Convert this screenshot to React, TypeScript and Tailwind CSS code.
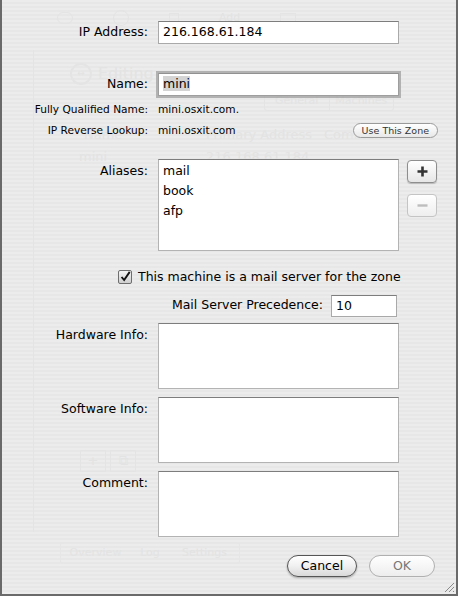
import React from "react";

const FONT = { fontFamily: '"DejaVu Sans", "Liberation Sans", sans-serif' };

function Field({ value, className = "", focused = false }: { value?: string; className?: string; focused?: boolean }) {
  return (
    <div
      className={`bg-white border border-[#a9a9a9] border-t-[#7d7d7d] px-[4px] text-[12.5px] leading-[20px] text-black ${
        focused ? "outline outline-[3px] outline-[#9a9a9a]/70 -outline-offset-[1px]" : ""
      } ${className}`}
    >
      {focused && value ? <span className="bg-[#d4d4d4]">{value}</span> : value}
    </div>
  );
}

function Row({ label, small, top, children, className = "" }: { label: string; small?: boolean; top?: boolean; children: React.ReactNode; className?: string }) {
  return (
    <div className={`flex ${top ? "items-start" : "items-center"} ${className}`}>
      <div
        className={`w-[147px] shrink-0 text-right pr-[1px] whitespace-nowrap ${small ? "text-[10.6px]" : "text-[12.5px]"} ${top ? "pt-[3px]" : ""} text-black`}
      >
        {label}
      </div>
      <div className="ml-[9px] flex-1 flex items-center">{children}</div>
    </div>
  );
}

function TextArea({ h, children }: { h: string; children?: React.ReactNode }) {
  return (
    <div className={`w-[241px] ${h} bg-white border border-[#b3b3b3] border-t-[#7d7d7d] px-[4px] py-[1px] text-[12.5px] leading-[20px]`}>
      {children}
    </div>
  );
}

// faded window behind the sheet
function Ghost() {
  const line = "border-[#e4e4e4]";
  return (
    <div className="flex flex-col h-full text-[#e3e3e3] text-[13px] whitespace-nowrap">
      <div className="flex items-center gap-[40px] pl-[55px] pt-[6px] h-[30px]">
        <div className={`w-[16px] h-[12px] rounded-full border ${line}`} />
        <div className={`w-[16px] h-[16px] rounded-full border ${line}`} />
        <div className={`w-[10px] h-[10px] border ${line}`} />
        <div className="text-[11px]">Add</div>
        <div className={`w-[16px] h-[10px] border ${line}`} />
      </div>
      <div className="flex flex-1 mt-[20px]">
        <div className={`w-[32px] border-r ${line}`} />
        <div className="flex-1 flex flex-col">
          <div className="flex items-center gap-[6px] pl-[36px] pt-[12px]">
            <div className={`w-[22px] h-[22px] rounded-full border-2 ${line} text-[9px] flex items-center justify-center`}>↔</div>
            <span className="text-[16px]">Editing</span>
          </div>
          <div className={`flex ml-[230px] mt-[5px] border ${line} rounded-[3px] w-[130px] h-[20px] text-[11px]`}>
            <div className={`flex-1 text-center leading-[18px] border-r ${line}`}>General</div>
            <div className="flex-1 text-center leading-[18px]">Machines</div>
          </div>
          <div className="flex mt-[14px] text-[13px]">
            <span className="ml-[50px] w-[122px]">Name</span>
            <span className="w-[118px]">Primary Address</span>
            <span>Comment</span>
          </div>
          <div className="flex mt-[2px] text-[13px]">
            <span className="ml-[45px] w-[127px]">mini</span>
            <span>216.168.61.184</span>
          </div>
          <div className="flex-1" />
          <div className="flex gap-[4px] ml-[46px] mb-[60px]">
            <div className={`w-[26px] h-[22px] border ${line} text-center leading-[20px]`}>+</div>
            <div className={`w-[26px] h-[22px] border ${line} text-center leading-[20px]`}>⧉</div>
          </div>
        </div>
      </div>
      <div className="flex ml-[58px] mb-[30px] mt-[10px] border border-[#e6e6e6] rounded-[3px] w-[180px] h-[22px] text-[11px]">
        <div className="flex-1 text-center leading-[20px]">Overview</div>
        <div className="w-[40px] text-center leading-[20px]">Log</div>
        <div className="flex-1 text-center leading-[20px]">Settings</div>
      </div>
    </div>
  );
}

export default function App() {
  return (
    <div style={FONT} className="relative w-[458px] h-[596px] overflow-hidden bg-[repeating-linear-gradient(0deg,#ececec_0px,#ececec_2px,#e7e7e7_2px,#e7e7e7_4px)] border-l-2 border-r-2 border-b-2 border-[#6a6a6a] text-black">
      <Ghost />

      {/* sheet */}
      <div className="absolute inset-0 flex flex-col pt-[21px] pr-[20px]">
        <Row label="IP Address:">
          <Field value="216.168.61.184" className="w-[241px] h-[23px]" />
        </Row>
        <Row label="Name:" className="mt-[29px]">
          <Field value="mini" focused className="w-[241px] h-[23px]" />
        </Row>
        <Row label="Fully Qualified Name:" small className="mt-[5px] h-[17px]">
          <span className="text-[10.6px]">mini.osxit.com.</span>
        </Row>
        <Row label="IP Reverse Lookup:" small className="mt-[4px] h-[17px]">
          <span className="text-[10.6px]">mini.osxit.com</span>
          <div className="ml-auto mr-[-2px] h-[15px] px-[8px] rounded-full border border-[#9a9a9a] bg-gradient-to-b from-white to-[#e8e8e8] text-[9.5px] leading-[13px] text-[#333]">
            Use This Zone
          </div>
        </Row>
        <Row label="Aliases:" top className="mt-[20px]">
          <TextArea h="h-[92px]">
            <div>mail</div>
            <div>book</div>
            <div>afp</div>
          </TextArea>
          <div className="self-start ml-[8px] flex flex-col gap-[11px] pt-[1px]">
            <div className="w-[30px] h-[23px] rounded-[4px] border border-[#8e8e8e] bg-gradient-to-b from-white to-[#e6e6e6] shadow-[0_1px_1px_rgba(0,0,0,0.2)] flex items-center justify-center">
              <svg width="13" height="13" viewBox="0 0 13 13"><path d="M6.5 1.5v10M1.5 6.5h10" stroke="#333" strokeWidth="2.6" /></svg>
            </div>
            <div className="w-[30px] h-[23px] rounded-[4px] border border-[#c4c4c4] bg-gradient-to-b from-white to-[#eeeeee] flex items-center justify-center">
              <svg width="13" height="13" viewBox="0 0 13 13"><path d="M1.5 6.5h10" stroke="#bdbdbd" strokeWidth="2.4" /></svg>
            </div>
          </div>
        </Row>
        <div className="flex items-center mt-[17px] ml-[116px]">
          <div className="w-[14px] h-[14px] rounded-[2px] border border-[#6e6e6e] bg-gradient-to-b from-[#f4f4f4] to-[#cfcfcf] flex items-center justify-center">
            <svg width="14" height="14" viewBox="0 0 14 14"><path d="M3 7l3 3.5L12.5 1" fill="none" stroke="#111" strokeWidth="2.2" /></svg>
          </div>
          <span className="ml-[6px] text-[12.5px]">This machine is a mail server for the zone</span>
        </div>
        <div className="flex items-center justify-end mt-[8px] mr-[39px]">
          <span className="text-[12.5px]">Mail Server Precedence:</span>
          <Field value="10" className="ml-[8px] w-[66px] h-[22px]" />
        </div>
        <Row label="Hardware Info:" top className="mt-[6px]">
          <TextArea h="h-[66px]" />
        </Row>
        <Row label="Software Info:" top className="mt-[8px]">
          <TextArea h="h-[66px]" />
        </Row>
        <Row label="Comment:" top className="mt-[8px]">
          <TextArea h="h-[66px]" />
        </Row>
        <div className="flex justify-end gap-[12px] mt-[18px] mr-[1px]">
          <div className="w-[70px] h-[22px] rounded-full border border-[#555] bg-gradient-to-b from-white via-[#f0f0f0] to-[#d9d9d9] shadow-[0_1px_2px_rgba(0,0,0,0.3)] text-center text-[12.5px] leading-[20px]">
            Cancel
          </div>
          <div className="w-[66px] h-[22px] rounded-full border border-[#b0b0b0] bg-gradient-to-b from-white to-[#ededed] text-center text-[12.5px] leading-[20px] text-[#777]">
            OK
          </div>
        </div>
      </div>

      <svg className="absolute right-[1px] bottom-[1px]" width="12" height="12" viewBox="0 0 12 12">
        <path d="M11 2L2 11M11 6L6 11M11 10L10 11" stroke="#8a8a8a" strokeWidth="1" />
      </svg>
    </div>
  );
}
